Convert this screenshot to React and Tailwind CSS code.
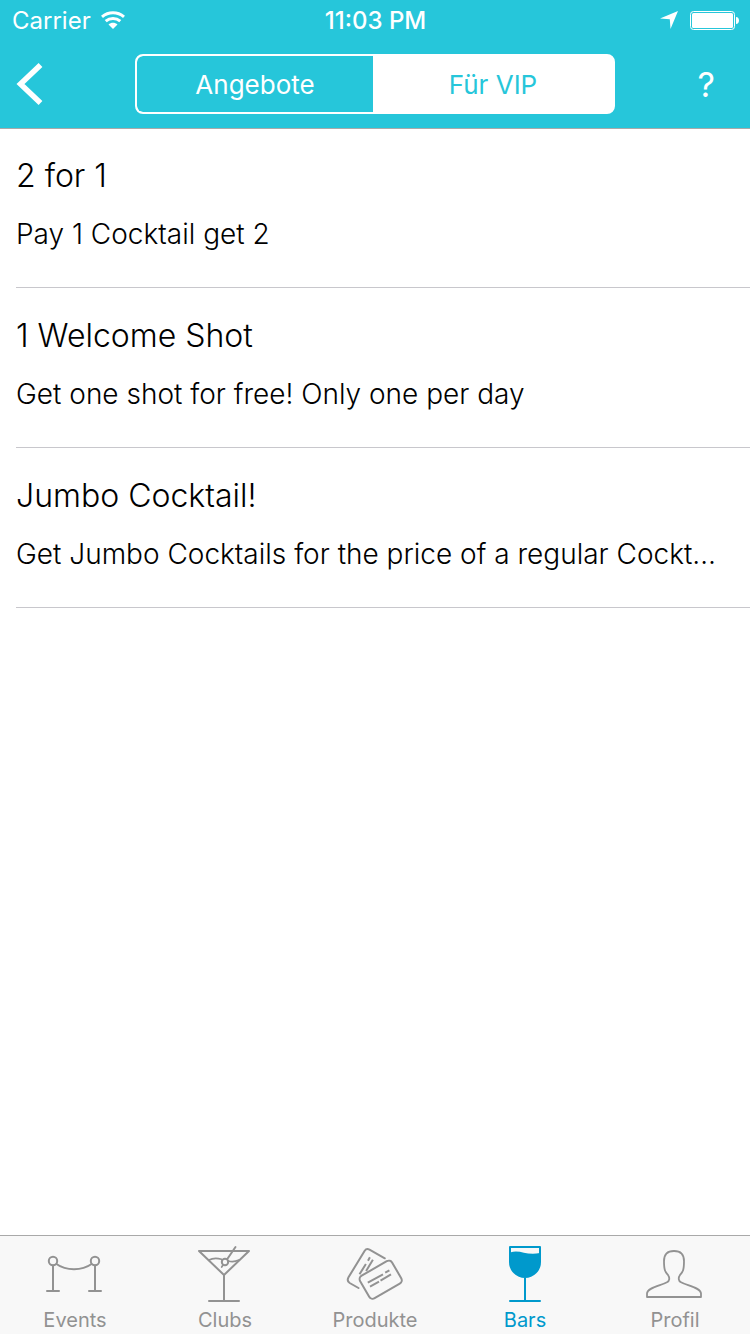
const line = {
  fill: "none",
  stroke: "currentColor",
  strokeWidth: 2,
  strokeLinecap: "round",
  strokeLinejoin: "round",
};

function TabIcon({ children }) {
  return (
    <svg className="size-15" viewBox="0 0 60 60" aria-hidden="true" {...line}>
      {children}
    </svg>
  );
}

function EventsIcon() {
  return (
    <TabIcon>
      <circle cx="8" cy="18" r="4.2" />
      <circle cx="50" cy="18" r="4.2" />
      <path d="M11.500 21C21 28 37 28 46.500 21M8 22.500V48M50 22.500V48M2 48H14M44 48H56" />
    </TabIcon>
  );
}

function ClubsIcon() {
  return (
    <TabIcon>
      <path d="M4 8H54L29 32ZM29 32V58M14 58H44" />
      <path d="M40.500 4L32.300 16" />
      <circle cx="30" cy="19" r="3.2" />
      <path d="M14 17C18 14.800 22 15 26.500 16.200M33.500 18C37 19 40 18.800 44 17M28 22L26.700 24" strokeWidth="1.700" />
    </TabIcon>
  );
}

function ProdukteIcon() {
  return (
    <TabIcon>
      <rect x="17.200" y="23.700" width="37" height="26" rx="4" transform="rotate(-30 35.700 36.700)" />
      <path d="M39.800 15.300L24.500 6.600Q21.500 5 19.700 7.700L3.500 34.300Q1.500 38 4.700 40L13.500 45" />
      <path strokeLinecap="butt" d="M20.900 21L14.500 31.300M27.900 16.800L21.100 28M24.900 14.300L23 17.800" />
      <path strokeLinecap="butt" d="M22.800 39.600L38 31.400M40.200 29.700L44.400 27.400M25 43.600L34 38.600M35.500 37.600L46 31.400" />
    </TabIcon>
  );
}

function BarsIcon() {
  return (
    <TabIcon>
      <path d="M15 4H45V19a15 15 0 0 1-30 0ZM30 34V58M15 58H45" />
      <path d="M15 9.500C25 6 31 13 45 10V19a15 15 0 0 1-30 0Z" fill="currentColor" stroke="none" />
    </TabIcon>
  );
}

function ProfilIcon() {
  return (
    <TabIcon>
      <path
        strokeWidth="1.800"
        d="M29 8C22 8 19 11.500 19 18C19 28 20.500 29 23 32C25 35 24.500 38 22 39.300C16 42.500 2 44.500 2 50.500V54H56V50.500C56 44.500 42 42.500 36 39.300C33.500 38 33 35 35 32C37.500 29 39 28 39 18C39 11.500 36 8 29 8Z"
      />
    </TabIcon>
  );
}

function StatusBar() {
  return (
    <div className="grid h-10 grid-cols-3 items-center pr-[11px] pl-3 text-2xl">
      <div className="flex items-center gap-2.5">
        <span className="pt-0.5">Carrier</span>
        <svg className="h-[18px] w-6" viewBox="0 0 24 18" fill="none" stroke="currentColor" strokeWidth="3" aria-label="WLAN">
          <path d="M1 5.800C7.500.300 16.500.300 23 5.800M4.700 10.200C9 6.500 15 6.500 19.300 10.200" />
          <path d="M7.500 13.500C10 11.200 14 11.200 16.500 13.500L12 18Z" fill="currentColor" stroke="none" />
        </svg>
      </div>
      <div className="pt-0.5 text-center font-medium whitespace-nowrap">11:03 PM</div>
      <div className="flex items-center justify-end gap-3">
        <svg className="h-[18px] w-[18px]" viewBox="0 0 18 18" fill="currentColor" aria-label="Ortung">
          <path d="M18 0L10.500 18L9.800 8.300L0 7.500Z" />
        </svg>
        <svg className="h-[19px] w-[49px]" viewBox="0 0 49 19" fill="currentColor" aria-label="Batterie">
          <rect x=".5" y=".5" width="44" height="18" rx="3" fill="none" stroke="currentColor" />
          <rect x="2" y="2" width="41" height="15" rx="1.500" />
          <path d="M46 6C50 6 50 13 46 13Z" />
        </svg>
      </div>
    </div>
  );
}

function NavBar() {
  return (
    <div className="grid grid-cols-[1fr_minmax(0,480px)_1fr] py-3.5">
      <button type="button" aria-label="Zurück" className="flex items-center pl-4">
        <svg className="h-11 w-7" viewBox="0 0 28 44" fill="none" stroke="currentColor" strokeWidth="5.500" aria-hidden="true">
          <path d="M24.500 3L4.500 22L24.500 41" />
        </svg>
      </button>
      <div role="group" aria-label="Angebotsart" className="grid h-15 grid-cols-[59fr_60fr] overflow-hidden rounded-lg border-2 border-white bg-white text-[26px]">
        <button type="button" aria-pressed="false" className="rounded-l-md bg-[#26c6da]">Angebote</button>
        <button type="button" aria-pressed="true" className="text-[#26c6da]">Für VIP</button>
      </div>
      <button type="button" aria-label="Hilfe" className="flex items-center justify-end pr-[35px] text-[34px]">?</button>
    </div>
  );
}

const offers = [
  { title: "2 for 1", text: "Pay 1 Cocktail get 2" },
  { title: "1 Welcome Shot", text: "Get one shot for free! Only one per day" },
  { title: "Jumbo Cocktail!", text: "Get Jumbo Cocktails for the price of a regular Cockt…" },
];

const tabs = [
  { label: "Events", Icon: EventsIcon },
  { label: "Clubs", Icon: ClubsIcon },
  { label: "Produkte", Icon: ProdukteIcon },
  { label: "Bars", Icon: BarsIcon, active: true },
  { label: "Profil", Icon: ProfilIcon },
];

export default function App() {
  return (
    <div className="flex min-h-screen flex-col bg-white font-['Inter',sans-serif]">
      <header className="border-b border-[#a9a9a9] bg-[#26c6da] text-white">
        <StatusBar />
        <NavBar />
      </header>

      <main className="-mt-px flex-1 pl-4">
        <ul>
          {offers.map((offer) => (
            <li key={offer.title} className="flex h-40 flex-col gap-[18px] border-b border-[#c8c7cc] pt-7 font-light text-black">
              <h2 className="text-[32px] leading-10">{offer.title}</h2>
              <p className="truncate text-[28px] leading-10">{offer.text}</p>
            </li>
          ))}
        </ul>
      </main>

      <nav aria-label="Hauptmenü" className="grid grid-cols-5 border-t border-[#a9a9a9] bg-[#f8f8f8] pt-[7px] pb-0.5">
        {tabs.map(({ label, Icon, active }) => (
          <a
            key={label}
            href={"#" + label.toLowerCase()}
            aria-current={active ? "page" : undefined}
            className={"flex flex-col items-center gap-[5px] " + (active ? "text-[#0099cc]" : "text-[#929292]")}
          >
            <Icon />
            <span className="text-xl leading-6">{label}</span>
          </a>
        ))}
      </nav>
    </div>
  );
}
